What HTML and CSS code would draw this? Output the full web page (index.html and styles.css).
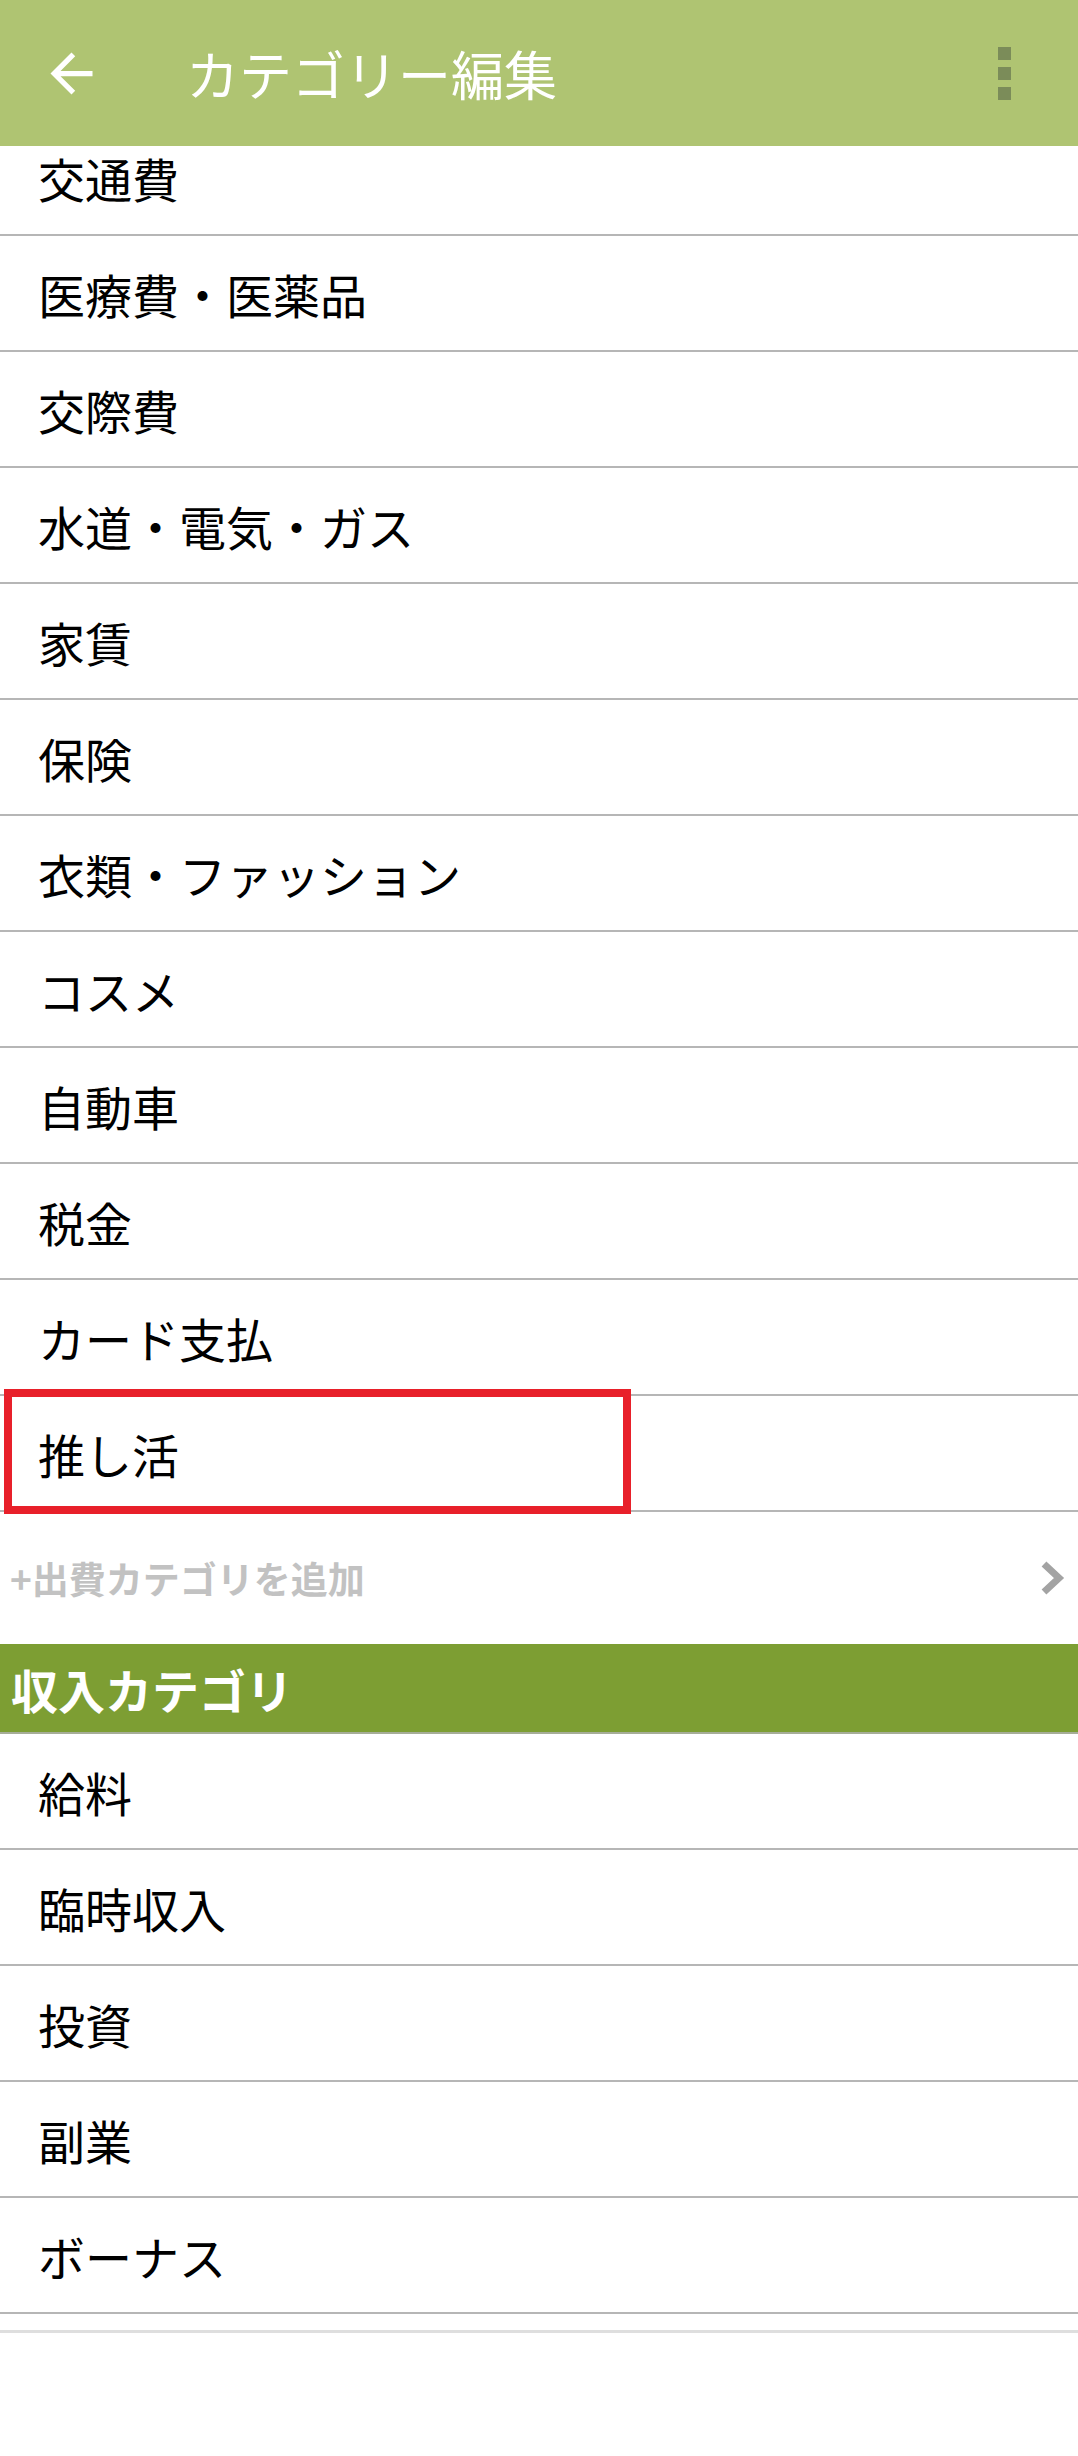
FILE: index.html
```html
<!DOCTYPE html>
<html lang="ja">
<head>
<meta charset="utf-8">
<title>カテゴリー編集</title>
<link rel="stylesheet" href="styles.css">
</head>
<body>
<header class="appbar">
  <div class="back">
    <svg viewBox="0 0 24 24" width="63" height="63"><path fill="#ffffff" d="M20 11H7.83l5.59-5.59L12 4l-8 8 8 8 1.41-1.41L7.83 13H20v-2z"/></svg>
  </div>
  <h1 class="title">カテゴリー編集</h1>
  <div class="menu"><span></span><span></span><span></span></div>
</header>
<main class="scroll">
  <ul class="list expense">
    <li class="row first">交通費</li>
    <li class="row">医療費・医薬品</li>
    <li class="row">交際費</li>
    <li class="row">水道・電気・ガス</li>
    <li class="row">家賃</li>
    <li class="row">保険</li>
    <li class="row">衣類・ファッション</li>
    <li class="row">コスメ</li>
    <li class="row">自動車</li>
    <li class="row">税金</li>
    <li class="row">カード支払</li>
    <li class="row highlighted">推し活<span class="mark"></span></li>
  </ul>
  <div class="add">
    <span class="add-label">+出費カテゴリを追加</span>
    <svg class="chev" viewBox="0 0 30 36" width="30" height="36"><polyline points="6,4 21,18 6,32" fill="none" stroke="#a3a3a3" stroke-width="7" stroke-linejoin="miter"/></svg>
  </div>
  <div class="section">収入カテゴリ</div>
  <ul class="list income">
    <li class="row">給料</li>
    <li class="row">臨時収入</li>
    <li class="row">投資</li>
    <li class="row">副業</li>
    <li class="row">ボーナス</li>
  </ul>
  <div class="footer-line"></div>
</main>
</body>
</html>
```
FILE: styles.css
```css
html, body {
  margin: 0;
  padding: 0;
  background: #ffffff;
}
body {
  width: 1078px;
  font-family: "Noto Sans CJK JP", "Noto Sans", sans-serif;
  color: #000000;
}
.appbar {
  height: 146px;
  background: #afc472;
  display: flex;
  align-items: center;
}
.back {
  width: 63px;
  height: 63px;
  margin-left: 40px;
}
.back svg {
  display: block;
}
.title {
  margin: 0 0 0 83px;
  font-size: 53px;
  font-weight: 400;
  color: #ffffff;
  line-height: 1;
}
.menu {
  margin-left: auto;
  margin-right: 67px;
  display: flex;
  flex-direction: column;
  gap: 7px;
}
.menu span {
  width: 13px;
  height: 13px;
  background: #7b8c59;
}
.scroll {
  overflow: hidden;
}
.list {
  list-style: none;
  margin: 0;
  padding: 0;
}
.expense {
  margin-top: -26px;
}
.row {
  position: relative;
  height: 116px;
  box-sizing: border-box;
  border-bottom: 2px solid #b6b6b6;
  display: flex;
  align-items: center;
  padding-left: 38px;
  font-size: 47px;
  line-height: 1;
}
.mark {
  position: absolute;
  left: 4px;
  top: -7px;
  width: 627px;
  height: 125px;
  box-sizing: border-box;
  border: 8px solid #e8202a;
}
.add {
  height: 132px;
  display: flex;
  align-items: center;
  justify-content: space-between;
  padding-left: 10px;
  padding-right: 10px;
}
.add-label {
  font-size: 37px;
  font-weight: 700;
  color: #c2c2c2;
  line-height: 1;
}
.chev {
  display: block;
  filter: blur(0.6px);
}
.section {
  height: 90px;
  box-sizing: border-box;
  background: #7d9e33;
  border-bottom: 2px solid #a6ad98;
  color: #ffffff;
  font-size: 47px;
  font-weight: 700;
  line-height: 1;
  display: flex;
  align-items: center;
  padding-left: 11px;
}
.footer-line {
  margin-top: 16px;
  height: 3px;
  background: #dedede;
}
```
